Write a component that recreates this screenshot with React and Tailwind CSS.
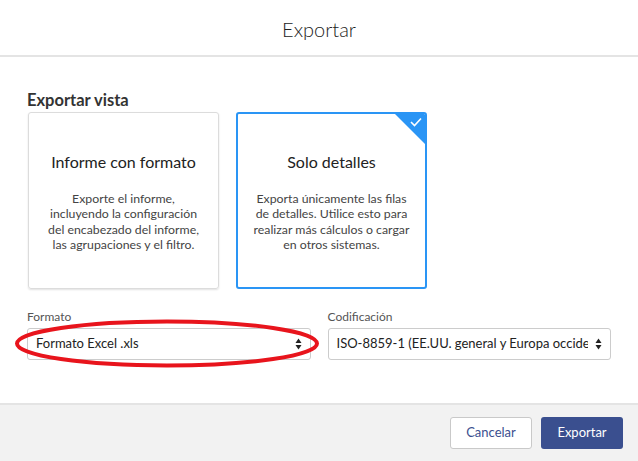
import React from "react";

const font = { fontFamily: 'Lato, "Noto Sans", sans-serif' };

function Arrows() {
  return (
    <svg width="7" height="14" viewBox="0 0 7 14" className="absolute right-[8px] top-[8px]">
      <path d="M3.5 1.5 L6.5 6 L0.5 6 Z" fill="#222" />
      <path d="M3.5 12.5 L6.5 8 L0.5 8 Z" fill="#222" />
    </svg>
  );
}

export default function App() {
  return (
    <div className="w-[638px] h-[461px] bg-white flex flex-col text-[#222] relative overflow-hidden" style={font}>
      <div className="h-[57px] flex items-center justify-center border-b-2 border-[#e4e4e4] shrink-0">
        <span className="text-[20px] font-light text-[#222] pt-[2px]">Exportar</span>
      </div>
      <div className="flex-1 px-[27px] pt-[33px]">
        <div className="text-[16.5px] font-bold leading-[20px] text-[#333]">Exportar vista</div>
        <div className="flex gap-[17px] mt-[2px] ml-[1px]">
          <div className="w-[191px] h-[177px] border border-[#dcdcdc] rounded-[3px] shadow-[0_1px_2px_rgba(0,0,0,0.12)] flex flex-col items-center pt-[38px] px-[6px]">
            <div className="text-[16px] leading-[22px] text-[#222]">Informe con formato</div>
            <div className="mt-[18px] text-[12.3px] leading-[15.3px] text-[#444] text-center">
              Exporte el informe,<br />incluyendo la configuración<br />del encabezado del informe,<br />las agrupaciones y el filtro.
            </div>
          </div>
          <div className="relative w-[191px] h-[177px] border-2 border-[#2a95f5] rounded-[3px] flex flex-col items-center pt-[37px] px-[6px] overflow-hidden">
            <div className="absolute right-0 top-0 w-0 h-0 border-t-[30px] border-l-[30px] border-t-[#2a95f5] border-l-transparent" />
            <svg className="absolute right-[3px] top-[3px]" width="12" height="10" viewBox="0 0 12 10">
              <path d="M1 5 L4.5 8.5 L11 1.5" stroke="white" strokeWidth="1.6" fill="none" />
            </svg>
            <div className="text-[16px] leading-[22px] text-[#222]">Solo detalles</div>
            <div className="mt-[18px] text-[12.3px] leading-[15.3px] text-[#444] text-center">
              Exporta únicamente las filas<br />de detalles. Utilice esto para<br />realizar más cálculos o cargar<br />en otros sistemas.
            </div>
          </div>
        </div>
        <div className="flex gap-[17px] mt-[20px]">
          <div className="w-[284px]">
            <div className="text-[12px] leading-[16px] text-[#555]">Formato</div>
            <div className="relative mt-[3px] h-[32px] border border-[#ccc] rounded-[3px] flex items-center pl-[8px] text-[13px] text-[#222]">
              Formato Excel .xls
              <Arrows />
            </div>
          </div>
          <div className="w-[284px]">
            <div className="text-[12px] leading-[16px] text-[#555]">Codificación</div>
            <div className="relative mt-[3px] h-[32px] border border-[#ccc] rounded-[3px] flex items-center pl-[8px] text-[13px] text-[#222] whitespace-nowrap">
              <span className="w-[251px] overflow-hidden">ISO-8859-1 (EE.UU. general y Europa occidental)</span>
              <Arrows />
            </div>
          </div>
        </div>
      </div>
      <div className="h-[58px] shrink-0 bg-[#f2f2f2] border-t-2 border-[#e4e4e4] flex items-center justify-end gap-[9px] pr-[15px]">
        <button className="w-[82px] h-[32px] bg-white border border-[#c9c9c9] rounded-[3px] text-[13px] text-[#3b4f8f]">Cancelar</button>
        <button className="w-[82px] h-[32px] bg-[#3a4f8f] rounded-[3px] text-[13px] text-white">Exportar</button>
      </div>
      <svg className="absolute left-0 top-0 pointer-events-none" width="638" height="461">
        <ellipse cx="167" cy="343.5" rx="150" ry="22" fill="none" stroke="#e8141c" strokeWidth="4" />
      </svg>
    </div>
  );
}
